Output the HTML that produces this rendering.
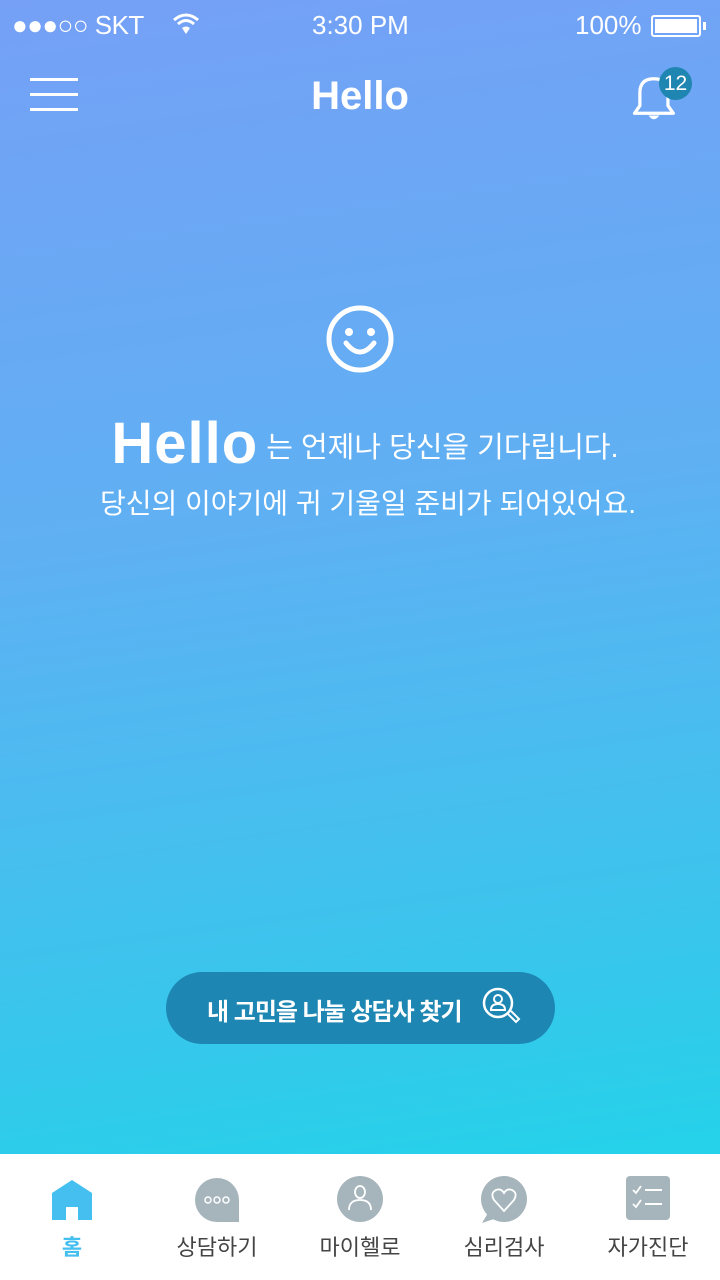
<!DOCTYPE html>
<html><head><meta charset="utf-8"><style>
*{margin:0;padding:0;box-sizing:border-box}
body{width:720px;height:1280px;overflow:hidden;font-family:"Liberation Sans","Noto Sans CJK KR",sans-serif;position:relative;background:linear-gradient(172deg,#75a0f6 0%,#5fb0f3 40%,#38c6ec 75%,#19d9e8 100%)}
.abs{position:absolute}
.w{color:#fff}
</style></head><body>
<div class="abs w" style="left:12px;top:10px;font-size:26px;letter-spacing:-0.5px">●●●○○ SKT</div>
<svg class="abs" style="left:172px;top:12px" width="28" height="24" viewBox="0 0 28 24"><path d="M2 8 Q14 -2 26 8" stroke="#fff" stroke-width="3" fill="none"/><path d="M6 12 Q14 5 22 12" stroke="#fff" stroke-width="3" fill="none"/><path d="M10 16 Q14 13 18 16 L14 22Z" fill="#fff"/></svg>
<div class="abs w" style="left:312px;top:10px;font-size:26px">3:30 PM</div>
<div class="abs w" style="left:575px;top:10px;font-size:26px">100%</div>
<div class="abs" style="left:651px;top:15px;width:50px;height:22px;border:2px solid #fff;border-radius:3px;padding:2px"><div style="background:#fff;width:100%;height:100%"></div></div>
<div class="abs" style="left:703px;top:22px;width:3px;height:8px;background:#fff"></div>
<div class="abs" style="left:30px;top:78px;width:48px;height:3px;background:#fff;box-shadow:0 15px 0 #fff,0 30px 0 #fff"></div>
<div class="abs w" style="left:0;width:720px;text-align:center;top:74px;font-size:40px;font-weight:bold;letter-spacing:0px">Hello</div>
<svg class="abs" style="left:628px;top:70px" width="54" height="52" viewBox="0 0 50 48"><path d="M6 40 L11 33 L11 21 Q11 8 24 8 Q37 8 37 21 L37 33 L42 40 Z" stroke="#fff" stroke-width="3" fill="none" stroke-linejoin="round"/><path d="M19 42 Q24 49 29 42" fill="#fff"/></svg>
<div class="abs w" style="left:659px;top:67px;width:33px;height:33px;border-radius:50%;background:#1f85b1;text-align:center;line-height:33px;font-size:21px">12</div>
<svg class="abs" style="left:324px;top:303px" width="72" height="72" viewBox="0 0 72 72"><circle cx="36" cy="36" r="31" stroke="#fff" stroke-width="5" fill="none"/><circle cx="25" cy="29" r="4" fill="#fff"/><circle cx="47" cy="29" r="4" fill="#fff"/><path d="M22 40 Q36 58 50 40" stroke="#fff" stroke-width="5" fill="none" stroke-linecap="round"/></svg>
<div class="abs w" style="left:0;width:730px;text-align:center;top:410px;font-size:29px;white-space:nowrap"><span style="font-size:58px;font-weight:bold;letter-spacing:1px;vertical-align:-6px">Hello</span> 는 언제나 당신을 기다립니다.</div>
<div class="abs w" style="left:0;width:736px;text-align:center;top:482px;font-size:28px;white-space:nowrap">당신의 이야기에 귀 기울일 준비가 되어있어요.</div>
<div class="abs" style="left:166px;top:972px;width:389px;height:72px;border-radius:36px;background:#1d86b3"></div>
<div class="abs w" style="left:207px;top:992px;font-size:24px;font-weight:bold;letter-spacing:-1px">내 고민을 나눌 상담사 찾기</div>
<svg class="abs" style="left:480px;top:985px" width="44" height="44" viewBox="0 0 44 44"><circle cx="18" cy="18" r="14" stroke="#fff" stroke-width="2.5" fill="none"/><circle cx="18" cy="14" r="4" stroke="#fff" stroke-width="2" fill="none"/><path d="M11 25 Q11 19 18 19 Q25 19 25 25 Z" stroke="#fff" stroke-width="2" fill="none"/><path d="M28 29 L36 37 L39 34 L31 26" stroke="#fff" stroke-width="2" fill="none"/></svg>
<div class="abs" style="left:0;top:1154px;width:720px;height:126px;background:#fff"></div>
<svg class="abs" style="left:52px;top:1180px" width="40" height="40" viewBox="0 0 40 40"><path d="M0 13 L20 0 L40 13 L40 40 L26 40 L26 27 L14 27 L14 40 L0 40Z" fill="#44bfef"/></svg>
<svg class="abs" style="left:193px;top:1176px" width="48" height="48" viewBox="0 0 48 48"><path d="M24 2 A22 22 0 1 0 24 46 L46 46 L46 24 A22 22 0 0 0 24 2Z" fill="#a6b5bc"/><circle cx="15" cy="24" r="3" stroke="#fff" stroke-width="1.5" fill="none"/><circle cx="24" cy="24" r="3" stroke="#fff" stroke-width="1.5" fill="none"/><circle cx="33" cy="24" r="3" stroke="#fff" stroke-width="1.5" fill="none"/></svg>
<svg class="abs" style="left:336px;top:1175px" width="48" height="48" viewBox="0 0 48 48"><circle cx="24" cy="24" r="23" fill="#a6b5bc"/><ellipse cx="24" cy="17" rx="5" ry="6" stroke="#fff" stroke-width="1.8" fill="none"/><path d="M13 35 Q13 25 24 25 Q35 25 35 35" stroke="#fff" stroke-width="1.8" fill="none"/></svg>
<svg class="abs" style="left:478px;top:1175px" width="50" height="50" viewBox="0 0 50 50"><circle cx="26" cy="24" r="23" fill="#a6b5bc"/><path d="M4 48 L10 38 L16 44Z" fill="#a6b5bc"/><path d="M26 36 L16 25 Q12 18 18 15 Q23 13 26 18 Q29 13 34 15 Q40 18 36 25Z" stroke="#fff" stroke-width="1.8" fill="none"/></svg>
<svg class="abs" style="left:626px;top:1176px" width="44" height="44" viewBox="0 0 44 44"><rect width="44" height="44" rx="4" fill="#a6b5bc"/><path d="M7 14 L10 17 L15 10 M7 28 L10 31 L15 24" stroke="#fff" stroke-width="1.8" fill="none"/><path d="M19 14 H36 M19 28 H36" stroke="#fff" stroke-width="2"/></svg>
<div class="abs" style="left:0;top:1230px;width:144px;text-align:center;font-size:22px;color:#44bfef;font-weight:bold">홈</div>
<div class="abs" style="left:145px;top:1230px;width:144px;text-align:center;font-size:22px;color:#444">상담하기</div>
<div class="abs" style="left:288px;top:1230px;width:144px;text-align:center;font-size:22px;color:#444">마이헬로</div>
<div class="abs" style="left:432px;top:1230px;width:144px;text-align:center;font-size:22px;color:#444">심리검사</div>
<div class="abs" style="left:576px;top:1230px;width:144px;text-align:center;font-size:22px;color:#444">자가진단</div>
</body></html>
